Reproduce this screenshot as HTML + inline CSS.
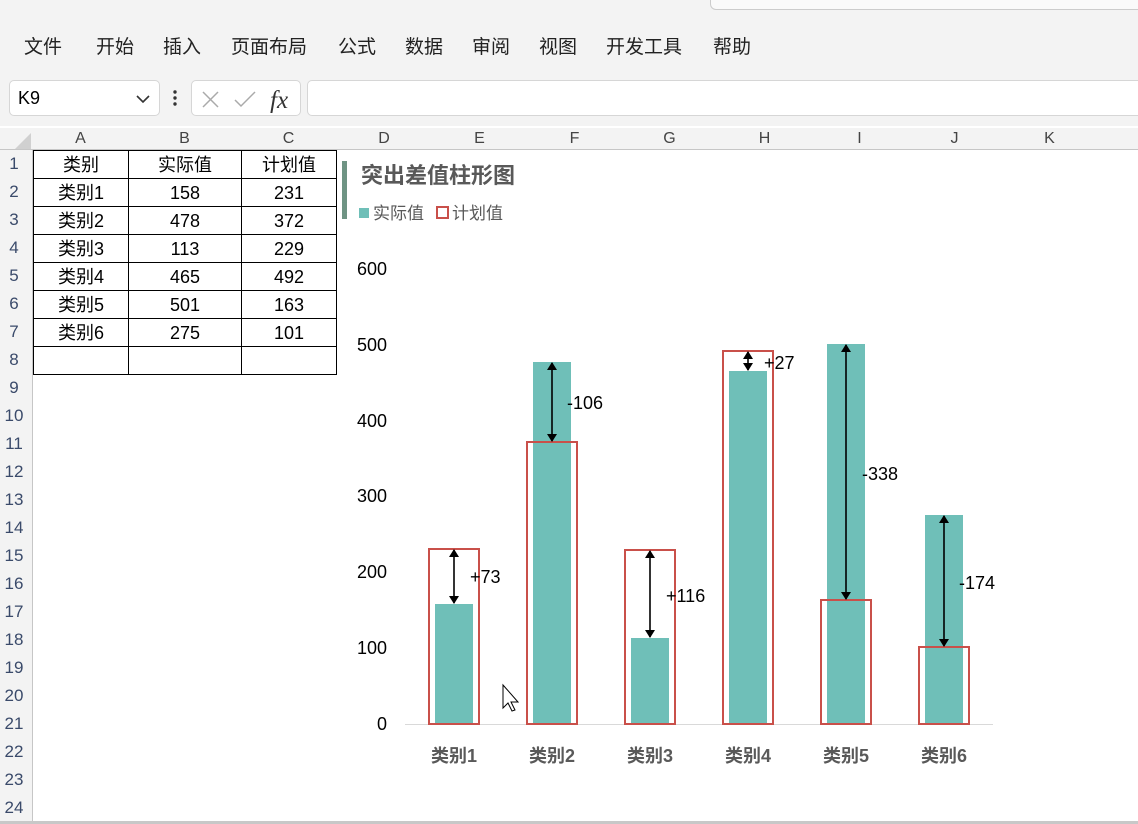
<!DOCTYPE html>
<html><head><meta charset="utf-8"><style>
*{margin:0;padding:0;box-sizing:border-box}
body{width:1138px;height:824px;overflow:hidden;background:#fff;font-family:"Liberation Sans","Noto Sans CJK SC",sans-serif;position:relative}
.rib{position:absolute;left:0;top:0;width:1138px;height:68px;background:#f3f3f3;box-shadow:0 1px 3px rgba(0,0,0,.15)}
.search{position:absolute;left:710px;top:-8px;width:440px;height:18px;border:1px solid #ccc;border-radius:6px;background:#fafafa}
.tabs{position:absolute;top:32px;left:0;font-size:19px;color:#222}
.tabs span{position:absolute;white-space:nowrap}
.fbar{position:absolute;left:0;top:68px;width:1138px;height:58px;background:#f3f3f3}
.box{position:absolute;background:#fff;border:1px solid #d6d6d6;border-radius:5px}
.ch{position:absolute;top:128px;height:22px;background:#f3f3f3;border-bottom:1px solid #c6c6c6}
.ch span{position:absolute;top:2px;font-size:16px;color:#444;text-align:center}
.rh{position:absolute;left:0;top:150px;width:33px;height:674px;background:#f3f3f3;border-right:1px solid #c6c6c6}
.rh span{position:absolute;left:0;width:28px;text-align:center;font-size:17px;color:#3a4a6a}
table{position:absolute;left:33px;top:150px;border-collapse:collapse}
td{border:1px solid #000;height:28px;font-size:18px;text-align:center;padding:0;color:#000;line-height:24px}
</style></head><body>
<div class="rib"><div class="search"></div>
<div class="tabs">
<span style="left:24px">文件</span><span style="left:96px">开始</span><span style="left:163px">插入</span><span style="left:231px">页面布局</span><span style="left:338px">公式</span><span style="left:405px">数据</span><span style="left:472px">审阅</span><span style="left:539px">视图</span><span style="left:606px">开发工具</span><span style="left:713px">帮助</span>
</div></div>
<div class="fbar">
<div class="box" style="left:9px;top:12px;width:151px;height:36px"><span style="position:absolute;left:8px;top:7px;font-size:18px">K9</span>
<svg style="position:absolute;left:126px;top:13px" width="14" height="10"><path d="M1 2 L7 8 L13 2" fill="none" stroke="#333" stroke-width="1.6"/></svg></div>
<svg style="position:absolute;left:172px;top:21px" width="6" height="20"><circle cx="3" cy="3" r="1.7" fill="#333"/><circle cx="3" cy="9" r="1.7" fill="#333"/><circle cx="3" cy="15" r="1.7" fill="#333"/></svg>
<div class="box" style="left:191px;top:12px;width:110px;height:36px">
<svg style="position:absolute;left:8px;top:6px" width="98" height="26"><path d="M3 5 L18 20 M18 5 L3 20" stroke="#aaa" stroke-width="1.5"/><path d="M35 13 L41 19 L55 5" fill="none" stroke="#aaa" stroke-width="1.5"/><text x="70" y="21" font-family="Liberation Serif" font-style="italic" font-size="25" fill="#333">fx</text></svg></div>
<div class="box" style="left:307px;top:12px;width:840px;height:36px"></div>
</div>
<div class="ch" style="left:0;width:1138px">
<svg style="position:absolute;left:14px;top:4px" width="18" height="18"><path d="M17 1 L17 17 L1 17 Z" fill="#d0d0d0"/></svg>
<span style="left:33px;width:95px">A</span><span style="left:128px;width:113px">B</span><span style="left:241px;width:95px">C</span><span style="left:336px;width:96px">D</span><span style="left:432px;width:95px">E</span><span style="left:527px;width:95px">F</span><span style="left:622px;width:95px">G</span><span style="left:717px;width:95px">H</span><span style="left:812px;width:95px">I</span><span style="left:907px;width:95px">J</span><span style="left:1002px;width:95px">K</span>
</div>
<div class="rh">
<span style="top:4px">1</span><span style="top:32px">2</span><span style="top:60px">3</span><span style="top:88px">4</span><span style="top:116px">5</span><span style="top:144px">6</span><span style="top:172px">7</span><span style="top:200px">8</span><span style="top:228px">9</span><span style="top:256px">10</span><span style="top:284px">11</span><span style="top:312px">12</span><span style="top:340px">13</span><span style="top:368px">14</span><span style="top:396px">15</span><span style="top:424px">16</span><span style="top:452px">17</span><span style="top:480px">18</span><span style="top:508px">19</span><span style="top:536px">20</span><span style="top:564px">21</span><span style="top:592px">22</span><span style="top:620px">23</span><span style="top:648px">24</span>
</div>
<div style="position:absolute;left:0;top:821px;width:1138px;height:3px;background:#c8c8c8"></div>
<table>
<colgroup><col style="width:95px"><col style="width:113px"><col style="width:95px"></colgroup>
<tr><td>类别</td><td>实际值</td><td>计划值</td></tr>
<tr><td>类别1</td><td>158</td><td>231</td></tr>
<tr><td>类别2</td><td>478</td><td>372</td></tr>
<tr><td>类别3</td><td>113</td><td>229</td></tr>
<tr><td>类别4</td><td>465</td><td>492</td></tr>
<tr><td>类别5</td><td>501</td><td>163</td></tr>
<tr><td>类别6</td><td>275</td><td>101</td></tr>
<tr><td></td><td></td><td></td></tr>
</table>
<svg style="position:absolute;left:0;top:0" width="1138" height="824" font-family="Liberation Sans, Noto Sans CJK SC, sans-serif">
<defs><marker id="a" markerWidth="8" markerHeight="10" refX="7" refY="5" orient="auto-start-reverse" markerUnits="userSpaceOnUse"><path d="M0 0 L8 5 L0 10 Z" fill="#000"/></marker></defs>
<rect x="342" y="161" width="5" height="58" fill="#6f9484"/>
<text x="361" y="183" font-size="22" font-weight="bold" fill="#595959">突出差值柱形图</text>
<rect x="359" y="208" width="10" height="10" fill="#6fbfb8"/>
<text x="373" y="219" font-size="17" fill="#595959">实际值</text>
<rect x="437" y="207" width="11" height="11" fill="none" stroke="#c9504a" stroke-width="2"/>
<text x="452" y="219" font-size="17" fill="#595959">计划值</text>
<g font-size="18" fill="#000" text-anchor="end">
<text x="387" y="275">600</text><text x="387" y="351">500</text><text x="387" y="427">400</text><text x="387" y="502">300</text><text x="387" y="578">200</text><text x="387" y="654">100</text><text x="387" y="730">0</text></g>
<line x1="405" y1="724.5" x2="993" y2="724.5" stroke="#d9d9d9"/>
<g fill="#6fbfb8">
<rect x="435" y="604" width="38" height="120"/><rect x="533" y="362" width="38" height="362"/><rect x="631" y="638" width="38" height="86"/><rect x="729" y="371" width="38" height="353"/><rect x="827" y="344" width="38" height="380"/><rect x="925" y="515" width="38" height="209"/></g>
<g fill="none" stroke="#c9504a" stroke-width="2">
<rect x="429" y="549" width="50" height="175"/><rect x="527" y="442" width="50" height="282"/><rect x="625" y="550" width="50" height="174"/><rect x="723" y="351" width="50" height="373"/><rect x="821" y="600" width="50" height="124"/><rect x="919" y="647" width="50" height="77"/></g>
<g stroke="#000" stroke-width="1.6" marker-start="url(#a)" marker-end="url(#a)">
<line x1="454" y1="550" x2="454" y2="603"/><line x1="552" y1="363" x2="552" y2="441"/><line x1="650" y1="551" x2="650" y2="637"/><line x1="748" y1="352" x2="748" y2="370"/><line x1="846" y1="345" x2="846" y2="599"/><line x1="944" y1="516" x2="944" y2="646"/></g>
<g font-size="18" fill="#000">
<text x="470" y="583">+73</text><text x="567" y="409">-106</text><text x="666" y="602">+116</text><text x="764" y="369">+27</text><text x="862" y="480">-338</text><text x="959" y="589">-174</text></g>
<g font-size="18" font-weight="bold" fill="#595959" text-anchor="middle">
<text x="454" y="762">类别1</text><text x="552" y="762">类别2</text><text x="650" y="762">类别3</text><text x="748" y="762">类别4</text><text x="846" y="762">类别5</text><text x="944" y="762">类别6</text></g>
<path d="M503 685 L503 708 L508 703 L512 711 L515 710 L511 702 L518 702 Z" fill="#fff" stroke="#000" stroke-width="1"/>
</svg>
</body></html>
